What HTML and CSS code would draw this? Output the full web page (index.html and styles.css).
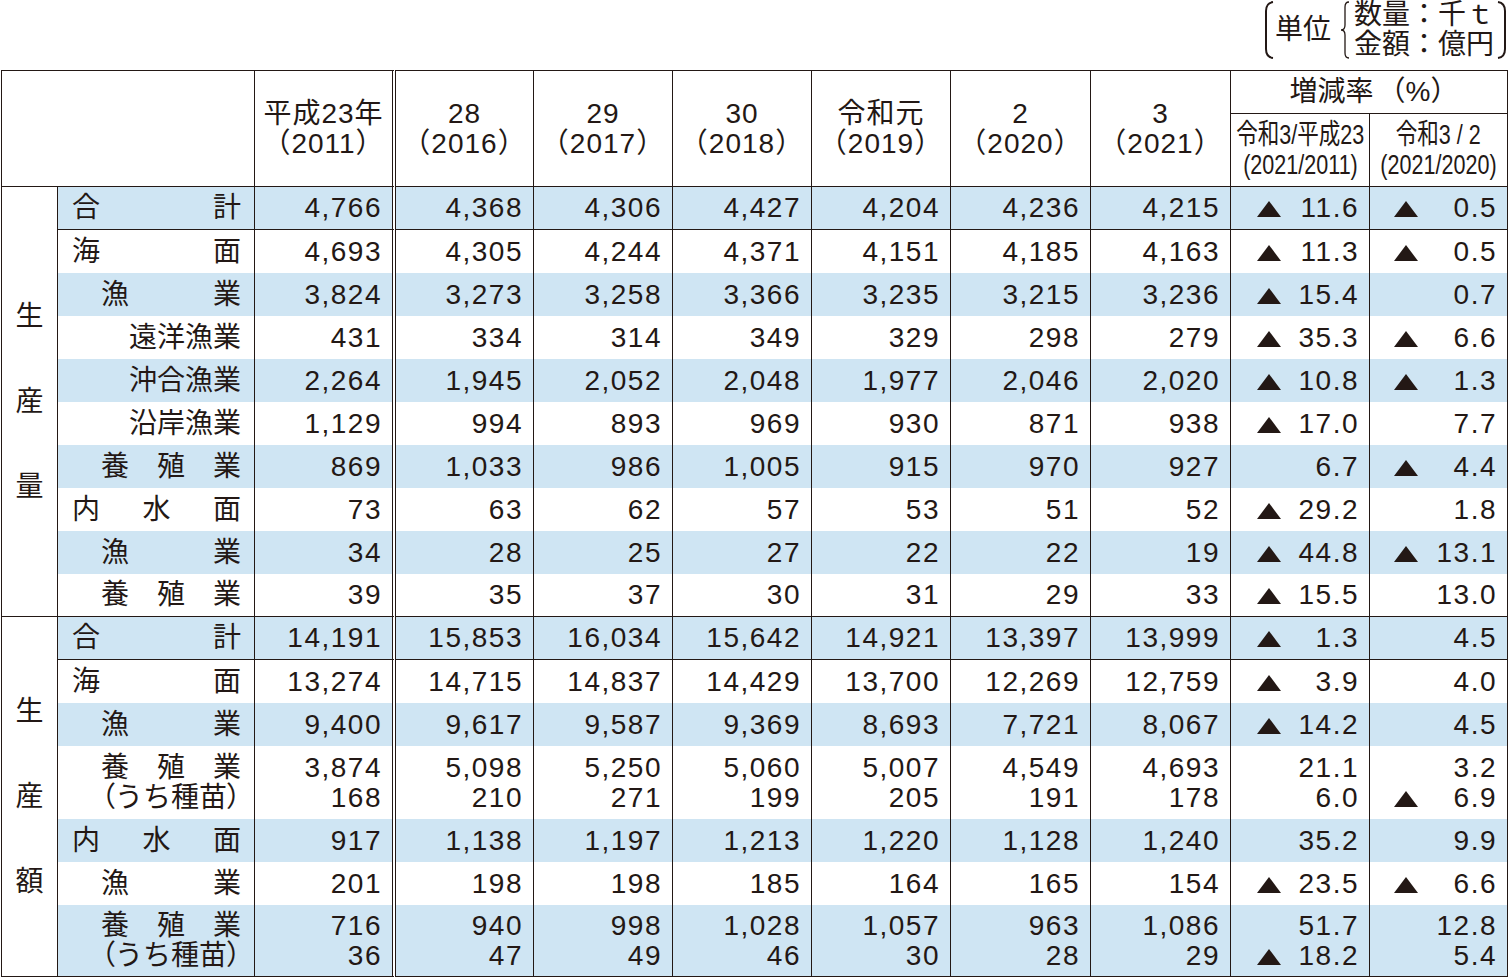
FILE: index.html
```html
<!DOCTYPE html>
<html lang="ja">
<head>
<meta charset="utf-8">
<title>漁業・養殖業の生産量・生産額</title>
<link rel="stylesheet" href="styles.css">
</head>
<body>
<div class="top">
  <div class="unit">
    <svg class="brk" width="12" height="58" viewBox="0 0 12 58"><path d="M10,1 Q3,2 3,10 L3,48 Q3,56 10,57"/></svg>
    <span class="tan">単位</span>
    <svg class="brc" width="12" height="58" viewBox="0 0 12 58"><path d="M10,1 Q6,1 6,6 L6,24 Q6,29 2,29 Q6,29 6,34 L6,52 Q6,57 10,57"/></svg>
    <div class="ulines"><div>数量：千ｔ</div><div>金額：億円</div></div>
    <svg class="brk" width="12" height="58" viewBox="0 0 12 58"><path d="M2,1 Q9,2 9,10 L9,48 Q9,56 2,57"/></svg>
  </div>
</div>
<table class="t">
<colgroup>
<col class="w1"><col class="w2"><col class="w3"><col class="w4"><col class="w5"><col class="w6"><col class="w7"><col class="w8"><col class="w9"><col class="w10"><col class="w11">
</colgroup>
<thead>
<tr class="ha">
<th class="c1" colspan="2" rowspan="2"></th>
<th class="yr dbl" rowspan="2">平成23年<br>（2011）</th>
<th class="yr" rowspan="2">28<br>（2016）</th>
<th class="yr" rowspan="2">29<br>（2017）</th>
<th class="yr" rowspan="2">30<br>（2018）</th>
<th class="yr" rowspan="2">令和元<br>（2019）</th>
<th class="yr" rowspan="2">2<br>（2020）</th>
<th class="yr" rowspan="2">3<br>（2021）</th>
<th class="rate" colspan="2">増減率<span class="pct">（%）</span></th>
</tr>
<tr class="hb">
<th class="sub"><div class="hl"><span class="cond">令和3/平成23</span></div><div class="hl"><span class="cond">(2021/2011)</span></div></th>
<th class="sub"><div class="hl"><span class="cond">令和3 / 2</span></div><div class="hl"><span class="cond">(2021/2020)</span></div></th>
</tr>
</thead>
<tbody>
<tr class="bl bb">
<td class="c1" rowspan="10"><div class="vert"><span>生</span><span>産</span><span>量</span></div></td>
<td><div class="lab"><span>合</span><span>計</span></div></td>
<td class="n dbl">4,766</td><td class="n">4,368</td><td class="n">4,306</td><td class="n">4,427</td><td class="n">4,204</td><td class="n">4,236</td><td class="n">4,215</td>
<td class="r"><div class="ln"><i class="tri"></i><span class="v">11.6</span></div></td>
<td class="r r2"><div class="ln"><i class="tri"></i><span class="v">0.5</span></div></td>
</tr>
<tr>
<td><div class="lab"><span>海</span><span>面</span></div></td>
<td class="n dbl">4,693</td><td class="n">4,305</td><td class="n">4,244</td><td class="n">4,371</td><td class="n">4,151</td><td class="n">4,185</td><td class="n">4,163</td>
<td class="r"><div class="ln"><i class="tri"></i><span class="v">11.3</span></div></td>
<td class="r r2"><div class="ln"><i class="tri"></i><span class="v">0.5</span></div></td>
</tr>
<tr class="bl">
<td><div class="lab l2"><span>漁</span><span>業</span></div></td>
<td class="n dbl">3,824</td><td class="n">3,273</td><td class="n">3,258</td><td class="n">3,366</td><td class="n">3,235</td><td class="n">3,215</td><td class="n">3,236</td>
<td class="r"><div class="ln"><i class="tri"></i><span class="v">15.4</span></div></td>
<td class="r r2"><div class="ln"><span class="v">0.7</span></div></td>
</tr>
<tr>
<td><div class="lab l3">遠洋漁業</div></td>
<td class="n dbl">431</td><td class="n">334</td><td class="n">314</td><td class="n">349</td><td class="n">329</td><td class="n">298</td><td class="n">279</td>
<td class="r"><div class="ln"><i class="tri"></i><span class="v">35.3</span></div></td>
<td class="r r2"><div class="ln"><i class="tri"></i><span class="v">6.6</span></div></td>
</tr>
<tr class="bl">
<td><div class="lab l3">沖合漁業</div></td>
<td class="n dbl">2,264</td><td class="n">1,945</td><td class="n">2,052</td><td class="n">2,048</td><td class="n">1,977</td><td class="n">2,046</td><td class="n">2,020</td>
<td class="r"><div class="ln"><i class="tri"></i><span class="v">10.8</span></div></td>
<td class="r r2"><div class="ln"><i class="tri"></i><span class="v">1.3</span></div></td>
</tr>
<tr>
<td><div class="lab l3">沿岸漁業</div></td>
<td class="n dbl">1,129</td><td class="n">994</td><td class="n">893</td><td class="n">969</td><td class="n">930</td><td class="n">871</td><td class="n">938</td>
<td class="r"><div class="ln"><i class="tri"></i><span class="v">17.0</span></div></td>
<td class="r r2"><div class="ln"><span class="v">7.7</span></div></td>
</tr>
<tr class="bl">
<td><div class="lab l2"><span>養</span><span>殖</span><span>業</span></div></td>
<td class="n dbl">869</td><td class="n">1,033</td><td class="n">986</td><td class="n">1,005</td><td class="n">915</td><td class="n">970</td><td class="n">927</td>
<td class="r"><div class="ln"><span class="v">6.7</span></div></td>
<td class="r r2"><div class="ln"><i class="tri"></i><span class="v">4.4</span></div></td>
</tr>
<tr>
<td><div class="lab"><span>内</span><span>水</span><span>面</span></div></td>
<td class="n dbl">73</td><td class="n">63</td><td class="n">62</td><td class="n">57</td><td class="n">53</td><td class="n">51</td><td class="n">52</td>
<td class="r"><div class="ln"><i class="tri"></i><span class="v">29.2</span></div></td>
<td class="r r2"><div class="ln"><span class="v">1.8</span></div></td>
</tr>
<tr class="bl">
<td><div class="lab l2"><span>漁</span><span>業</span></div></td>
<td class="n dbl">34</td><td class="n">28</td><td class="n">25</td><td class="n">27</td><td class="n">22</td><td class="n">22</td><td class="n">19</td>
<td class="r"><div class="ln"><i class="tri"></i><span class="v">44.8</span></div></td>
<td class="r r2"><div class="ln"><i class="tri"></i><span class="v">13.1</span></div></td>
</tr>
<tr class="bb">
<td><div class="lab l2"><span>養</span><span>殖</span><span>業</span></div></td>
<td class="n dbl">39</td><td class="n">35</td><td class="n">37</td><td class="n">30</td><td class="n">31</td><td class="n">29</td><td class="n">33</td>
<td class="r"><div class="ln"><i class="tri"></i><span class="v">15.5</span></div></td>
<td class="r r2"><div class="ln"><span class="v">13.0</span></div></td>
</tr>

<tr class="bl bb">
<td class="c1" rowspan="7"><div class="vert"><span>生</span><span>産</span><span>額</span></div></td>
<td><div class="lab"><span>合</span><span>計</span></div></td>
<td class="n dbl">14,191</td><td class="n">15,853</td><td class="n">16,034</td><td class="n">15,642</td><td class="n">14,921</td><td class="n">13,397</td><td class="n">13,999</td>
<td class="r"><div class="ln"><i class="tri"></i><span class="v">1.3</span></div></td>
<td class="r r2"><div class="ln"><span class="v">4.5</span></div></td>
</tr>
<tr>
<td><div class="lab"><span>海</span><span>面</span></div></td>
<td class="n dbl">13,274</td><td class="n">14,715</td><td class="n">14,837</td><td class="n">14,429</td><td class="n">13,700</td><td class="n">12,269</td><td class="n">12,759</td>
<td class="r"><div class="ln"><i class="tri"></i><span class="v">3.9</span></div></td>
<td class="r r2"><div class="ln"><span class="v">4.0</span></div></td>
</tr>
<tr class="bl">
<td><div class="lab l2"><span>漁</span><span>業</span></div></td>
<td class="n dbl">9,400</td><td class="n">9,617</td><td class="n">9,587</td><td class="n">9,369</td><td class="n">8,693</td><td class="n">7,721</td><td class="n">8,067</td>
<td class="r"><div class="ln"><i class="tri"></i><span class="v">14.2</span></div></td>
<td class="r r2"><div class="ln"><span class="v">4.5</span></div></td>
</tr>
<tr class="dr">
<td><div class="lab l2"><span>養</span><span>殖</span><span>業</span></div><div class="lab l2"><span class="p">（</span><span>う</span><span>ち</span><span>種</span><span>苗</span><span class="p">）</span></div></td>
<td class="n dbl">3,874<br>168</td><td class="n">5,098<br>210</td><td class="n">5,250<br>271</td><td class="n">5,060<br>199</td><td class="n">5,007<br>205</td><td class="n">4,549<br>191</td><td class="n">4,693<br>178</td>
<td class="r"><div class="ln"><span class="v">21.1</span></div><div class="ln"><span class="v">6.0</span></div></td>
<td class="r r2"><div class="ln"><span class="v">3.2</span></div><div class="ln"><i class="tri"></i><span class="v">6.9</span></div></td>
</tr>
<tr class="bl">
<td><div class="lab"><span>内</span><span>水</span><span>面</span></div></td>
<td class="n dbl">917</td><td class="n">1,138</td><td class="n">1,197</td><td class="n">1,213</td><td class="n">1,220</td><td class="n">1,128</td><td class="n">1,240</td>
<td class="r"><div class="ln"><span class="v">35.2</span></div></td>
<td class="r r2"><div class="ln"><span class="v">9.9</span></div></td>
</tr>
<tr>
<td><div class="lab l2"><span>漁</span><span>業</span></div></td>
<td class="n dbl">201</td><td class="n">198</td><td class="n">198</td><td class="n">185</td><td class="n">164</td><td class="n">165</td><td class="n">154</td>
<td class="r"><div class="ln"><i class="tri"></i><span class="v">23.5</span></div></td>
<td class="r r2"><div class="ln"><i class="tri"></i><span class="v">6.6</span></div></td>
</tr>
<tr class="bl bb dr last">
<td><div class="lab l2"><span>養</span><span>殖</span><span>業</span></div><div class="lab l2"><span class="p">（</span><span>う</span><span>ち</span><span>種</span><span>苗</span><span class="p">）</span></div></td>
<td class="n dbl">716<br>36</td><td class="n">940<br>47</td><td class="n">998<br>49</td><td class="n">1,028<br>46</td><td class="n">1,057<br>30</td><td class="n">963<br>28</td><td class="n">1,086<br>29</td>
<td class="r"><div class="ln"><span class="v">51.7</span></div><div class="ln"><i class="tri"></i><span class="v">18.2</span></div></td>
<td class="r r2"><div class="ln"><span class="v">12.8</span></div><div class="ln"><span class="v">5.4</span></div></td>
</tr>
</tbody>
</table>
</body>
</html>
```

FILE: styles.css
```css
html, body {
  margin: 0;
  padding: 0;
  background: #ffffff;
}
body {
  width: 1510px;
  font-family: "Liberation Sans", "Noto Sans CJK JP", sans-serif;
  font-size: 28px;
  line-height: 30px;
  color: #231815;
}

/* unit note */
.top {
  width: 1508px;
  height: 70px;
  display: flex;
  justify-content: flex-end;
  align-items: flex-start;
}
.unit {
  display: flex;
  align-items: center;
  height: 60px;
}
.unit svg {
  display: block;
  fill: none;
  stroke: #231815;
}
.brk path { stroke-width: 2; }
.brc path { stroke-width: 1.3; }
.tan { margin: 0 8px 0 0; }
.ulines { margin: 0 2px 0 3px; line-height: 30px; }

/* table */
.t {
  border-collapse: separate;
  border-spacing: 0;
  table-layout: fixed;
  width: 1507px;
  margin-left: 1px;
}
.w1 { width: 57px; }
.w2 { width: 197px; }
.w3 { width: 141px; }
.w4 { width: 138px; }
.w5 { width: 139px; }
.w6 { width: 139px; }
.w7 { width: 139px; }
.w8 { width: 140px; }
.w9 { width: 140px; }
.w10 { width: 139px; }
.w11 { width: 138px; }

.t th, .t td {
  padding: 0;
  border-right: 1px solid #231815;
  font-weight: normal;
  vertical-align: middle;
  box-sizing: border-box;
}
.t .c1 {
  border-left: 1px solid #231815;
  border-bottom: 1px solid #231815;
  background: #ffffff;
}
.t .dbl {
  border-right: 4px double #231815;
  background-clip: padding-box;
}
.t thead th {
  border-bottom: 1px solid #231815;
  text-align: center;
  line-height: 30px;
}
.ha { height: 44px; }
.ha th { border-top: 1px solid #231815; }
.hb { height: 73px; }
.yr { letter-spacing: 1px; }
.t th.rate { padding-left: 10px; }
.pct { margin-left: 4px; }
.hl {
  display: flex;
  justify-content: center;
}
.cond {
  display: block;
  flex: none;
  white-space: nowrap;
  transform: scaleX(0.77);
}

tbody tr { height: 43px; }
tbody tr.dr { height: 73px; }
tbody tr.dr.last { height: 72px; }
.bl td { background: #cfe5f3; }
.bl td.c1 { background: #ffffff; }
.bb td { border-bottom: 1px solid #231815; }

.vert {
  display: flex;
  flex-direction: column;
  align-items: center;
  gap: 57px;
  line-height: 28px;
}

.lab {
  display: flex;
  justify-content: space-between;
  padding: 0 13px 0 14px;
}
.lab.l2 { padding-left: 43px; }
.lab.l3 { justify-content: flex-end; }
.lab .p { font-feature-settings: "palt"; }

.n {
  text-align: right;
  padding-right: 10px !important;
  letter-spacing: 1.5px;
}
.r {
  padding: 0 10px 0 26px !important;
  letter-spacing: 1.5px;
}
.r.r2 { padding-left: 24px !important; }
.ln {
  display: flex;
  align-items: baseline;
}
.ln .v { margin-left: auto; }
.tri {
  display: block;
  width: 0;
  height: 0;
  border-left: 12px solid transparent;
  border-right: 12px solid transparent;
  border-bottom: 16px solid #231815;
}
```
